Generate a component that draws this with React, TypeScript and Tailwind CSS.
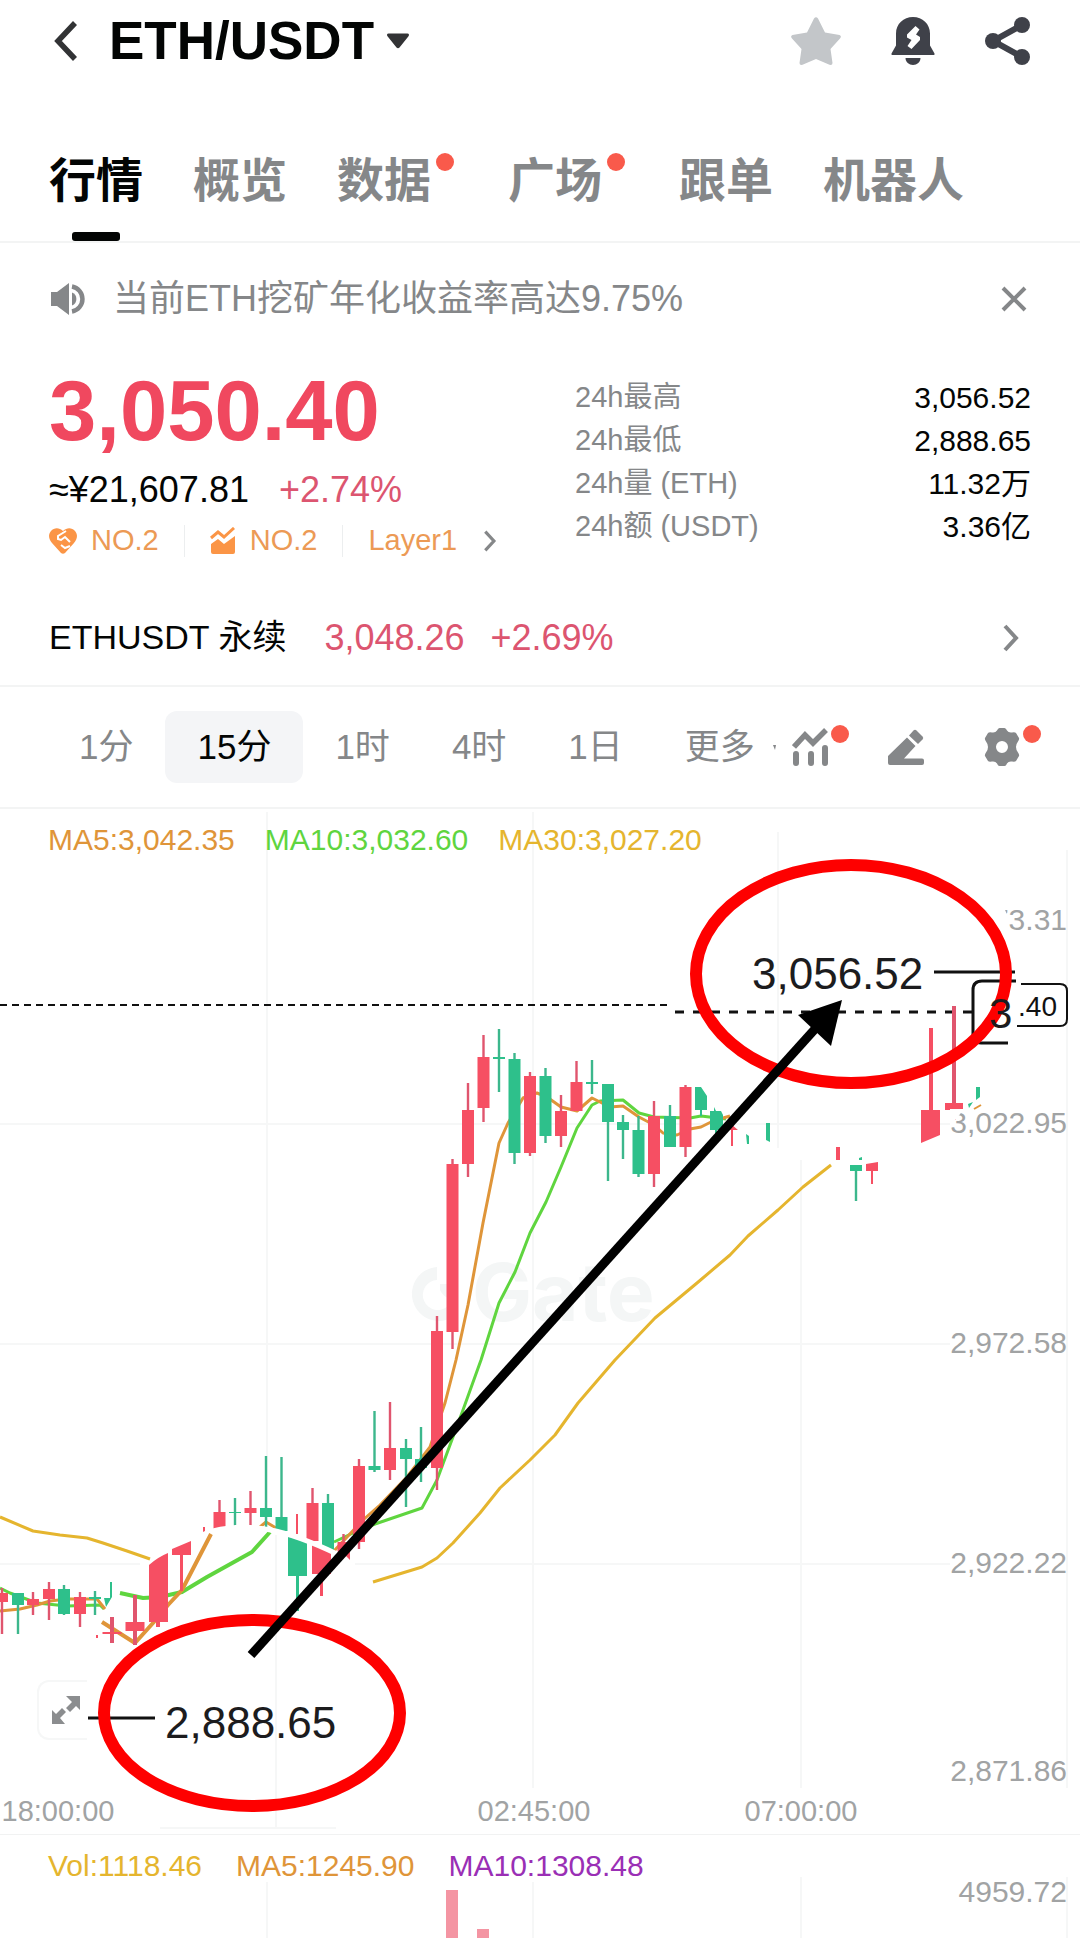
import { useState } from 'react';

const RED = '#f64f63';
const GREEN = '#2ec08b';

interface Candle {
  x: number;
  high: number;
  low: number;
  top: number;
  bottom: number;
  up: boolean;
  w?: number;
}

// [center x, wick top, wick bottom, body top, body bottom, rising, body width]
const candles: Candle[] = (
  [
    [2, 1588, 1634, 1593, 1602, 1],
    [18, 1593, 1634, 1593, 1605, 0],
    [33, 1592, 1615, 1599, 1605, 1],
    [49, 1582, 1620, 1589, 1599, 1],
    [64, 1585, 1615, 1589, 1614, 0],
    [80, 1592, 1627, 1597, 1614, 1],
    [95, 1591, 1615, 1597, 1599, 0],
    [112, 1617, 1643, 1632, 1634, 1, 19],
    [135, 1595, 1645, 1622, 1631, 1, 19],
    [219.5, 1500, 1512, 1512, 1530, 1],
    [235, 1498, 1527, 1512, 1513, 0],
    [250.5, 1491, 1526, 1508, 1513, 1],
    [266, 1456, 1527, 1508, 1517, 0],
    [281.5, 1457, 1517, 1517, 1531, 0],
    [312.5, 1488, 1503, 1503, 1541, 1],
    [328, 1494, 1503, 1503, 1550, 0],
    [343.5, 1534, 1542, 1542, 1556, 1],
    [359, 1459, 1549, 1466, 1542, 1],
    [374.5, 1411, 1472, 1466, 1470, 0],
    [390, 1402, 1480, 1448, 1470, 1],
    [406, 1439, 1507, 1448, 1459, 0],
    [421, 1427, 1482, 1459, 1468, 0],
    [437, 1316, 1490, 1331, 1468, 1],
    [452.5, 1159, 1349, 1164, 1332, 1],
    [468, 1083, 1177, 1110, 1164, 1],
    [483.5, 1035, 1122, 1057, 1108, 1],
    [499, 1029, 1092, 1057, 1059, 0],
    [514.5, 1053, 1164, 1059, 1153, 0],
    [530, 1072, 1156, 1076, 1153, 1],
    [545.5, 1068, 1143, 1076, 1136, 0],
    [561, 1095, 1147, 1111, 1136, 1],
    [576.5, 1061, 1111, 1082, 1111, 1],
    [592, 1060, 1094, 1082, 1084, 0],
    [608, 1084, 1181, 1084, 1122, 0],
    [623, 1115, 1159, 1122, 1130, 0],
    [638.5, 1116, 1177, 1130, 1174, 0],
    [654, 1101, 1187, 1116, 1174, 1],
    [670, 1105, 1147, 1116, 1147, 0],
    [685.5, 1085, 1157, 1087, 1147, 1],
    [856, 1165, 1201, 1165, 1171, 0],
    [954, 1006, 1120, 1103, 1110, 1, 18],
  ] as number[][]
).map(([x, high, low, top, bottom, up, w]) => ({ x, high, low, top, bottom, up: up === 1, w }));

const tabs = [
  { name: '行情' },
  { name: '概览' },
  { name: '数据', dot: true },
  { name: '广场', dot: true },
  { name: '跟单' },
  { name: '机器人' },
];

const stats = [
  { label: '24h最高', value: '3,056.52' },
  { label: '24h最低', value: '2,888.65' },
  { label: '24h量 (ETH)', value: '11.32万' },
  { label: '24h额 (USDT)', value: '3.36亿' },
];

const periods = ['1分', '15分', '1时', '4时', '1日', '更多'];

function Chevron({ className }: { className: string }) {
  return (
    <svg viewBox="0 0 16 28" className={className} fill="none" stroke="currentColor" strokeWidth="4">
      <path d="M2 2l11 12L2 26" />
    </svg>
  );
}

function RedDot({ className }: { className: string }) {
  return <span className={`absolute h-[18px] w-[18px] rounded-full bg-[#f95a4b] ${className}`} />;
}

function Header() {
  return (
    <header className="flex h-[82px] items-center px-[49px]">
      <button aria-label="返回" className="ml-1 text-[#323335]">
        <svg viewBox="0 0 26 42" className="h-[42px] w-[26px]" fill="none" stroke="currentColor" strokeWidth="5.5">
          <path d="M22 3L5 21l17 18" />
        </svg>
      </button>
      <button className="ml-[30px] flex items-center gap-3">
        <h1 className="text-[53px] font-bold leading-[60px] text-[#030504]">ETH/USDT</h1>
        <svg viewBox="0 0 24 16" className="h-4 w-6 fill-[#323335]">
          <path d="M2.500 0.500h19c1.500 0 2 1.500 1 2.700l-9 11.300c-.9 1-2.100 1-3 0L1.500 3.200C.5 2 1 .5 2.500 .5z" />
        </svg>
      </button>
      <div className="ml-auto flex items-center gap-[50px]">
        <button aria-label="收藏">
          <svg viewBox="0 0 50 48" className="h-12 w-[50px]" fill="#c3c6c9">
            <path d="M23 1.500q2-2.500 4 0l7 14 14.500 2.500q2.500 1 .5 3.500L39.500 32l2 14q0 2.500-3 1.800L25 42 11.500 47.800q-3 .7-3-1.800l2-14L1 21.500q-2-2.500.5-3.500L16 15.500z" />
          </svg>
        </button>
        <button aria-label="提醒">
          <svg viewBox="0 0 44 48" className="h-12 w-11" fill="#3f4149">
            <path d="M22 0c9.500 0 17 7 17 16.500v12l4.500 8q.5 1.500-1 1.500h-41q-1.500 0-1-1.500l4.500-8v-12C5 7 12.500 0 22 0z" />
            <path d="M14.500 41h15c0 4-3.500 7-7.500 7s-7.500-3-7.500-7z" />
            <path fill="#fff" d="M24.500 9l4 3.500-3.500 5 4 2.500v3L20.500 32l-4-3 4-6-4.500-2.500v-3z" />
          </svg>
        </button>
        <button aria-label="分享">
          <svg viewBox="0 0 46 48" className="h-12 w-[46px]" fill="#3f4149" stroke="#3f4149">
            <path d="M37 8L8 24l29 16" fill="none" strokeWidth="6" />
            <circle cx="37" cy="8" r="8" stroke="none" />
            <circle cx="8" cy="24" r="8" stroke="none" />
            <circle cx="37" cy="40" r="8" stroke="none" />
          </svg>
        </button>
      </div>
    </header>
  );
}

function Tabs() {
  const [active, setActive] = useState('行情');
  return (
    <nav className="flex gap-[50px] border-b-2 border-[#f3f4f4] px-[49px] pt-[71px]">
      {tabs.map((t) => (
        <button
          key={t.name}
          onClick={() => setActive(t.name)}
          className={`relative pb-8 text-[47px] font-bold leading-[56px] ${t.name === active ? 'text-[#030504]' : 'text-[#858789]'} ${t.dot ? 'mr-[27px]' : ''}`}
        >
          <span className="relative block">
            {t.name}
            {t.dot && <RedDot className="-right-[23px] top-0" />}
          </span>
          {t.name === active && (
            <span className="absolute bottom-0 left-1/2 h-[9px] w-12 -translate-x-1/2 rounded-[3px] bg-[#030504]" />
          )}
        </button>
      ))}
    </nav>
  );
}

function Notice() {
  return (
    <div className="flex h-28 items-center px-[49px] text-[#858789]">
      <svg viewBox="0 0 38 32" className="h-8 w-[38px]" fill="currentColor">
        <path d="M2 9h6L20 0v32L8 23H2z" />
        <path d="M23 9.500a7 7 0 0 1 0 13z" />
        <path d="M23 3.500a12.700 12.700 0 0 1 0 25" fill="none" stroke="currentColor" strokeWidth="4.500" />
      </svg>
      <p className="ml-[26px] text-[36px] leading-[44px]">当前ETH挖矿年化收益率高达9.75%</p>
      <button aria-label="关闭" className="ml-auto mr-1">
        <svg viewBox="0 0 26 26" className="h-[26px] w-[26px]" stroke="currentColor" strokeWidth="4">
          <path d="M2 2l22 22M24 2L2 24" />
        </svg>
      </button>
    </div>
  );
}

function Price() {
  return (
    <section className="flex justify-between px-[49px]">
      <div className="pt-[14px]">
        <div className="text-[85px] font-bold leading-[84px] text-[#f0485f]">3,050.40</div>
        <div className="mt-[15px] flex h-11 items-center gap-[30px] text-[36px]">
          <span className="text-[#030504]">≈¥21,607.81</span>
          <span className="text-[#dc5570]">+2.74%</span>
        </div>
        <div className="mt-[13px] flex h-8 items-center text-[29px] text-[#ec9a55]">
          <svg viewBox="0 0 28 26" className="h-[26px] w-7" fill="#fb9546">
            <path d="M14 3c4-4 9-3.500 12 0s2.500 8-1 12L16 25q-2 1.500-4 0L3 15C-.5 11-1 6.500 2 3s8-4 12 0z" />
            <path d="M17 3L9 8v3l3 1 4-3 5 5M12 17l4 3 5-2" fill="none" stroke="#fff" strokeWidth="2" />
          </svg>
          <span className="ml-[14px]">NO.2</span>
          <span className="mx-[25px] h-8 w-px bg-[#eceeef]" />
          <svg viewBox="0 0 26 28" className="h-7 w-[26px]" fill="#fb9546">
            <path d="M1 17l7-5 6 5 11-8v16q0 2-2 2H3q-2 0-2-2z" />
            <path d="M1 11l7-6 6 5 10-9" fill="none" stroke="#fb9546" strokeWidth="3" />
          </svg>
          <span className="ml-[14px]">NO.2</span>
          <span className="mx-[25px] h-8 w-px bg-[#eceeef]" />
          <a href="#layer1" className="flex items-center gap-[26px]">
            Layer1
            <Chevron className="h-[22px] w-[14px] text-[#858789]" />
          </a>
        </div>
      </div>
      <dl className="w-[456px] pt-[21px] text-[29px] leading-[43px]">
        {stats.map((s) => (
          <div key={s.label} className="flex h-[43px] justify-between">
            <dt className="text-[#858789]">{s.label}</dt>
            <dd className="text-[30px] text-[#030504]">{s.value}</dd>
          </div>
        ))}
      </dl>
    </section>
  );
}

function Perpetual() {
  return (
    <a href="#perpetual" className="mt-[33px] flex h-[97px] items-center border-b-2 border-[#f3f4f4] px-[49px] text-[36px]">
      <span className="text-[34px] text-[#030504]">ETHUSDT 永续</span>
      <span className="ml-[38px] text-[#dc5570]">3,048.26</span>
      <span className="ml-[26px] text-[#dc5570]">+2.69%</span>
      <Chevron className="ml-auto mr-3 h-7 w-4 text-[#858789]" />
    </a>
  );
}

function Toolbar() {
  const [period, setPeriod] = useState('15分');
  return (
    <div className="flex h-[122px] items-center border-b-2 border-[#f3f4f4] pl-[79px] pr-[60px] text-[#858789]">
      <div className="flex items-center gap-[62px] text-[35px]">
        {periods.map((p) => (
          <button
            key={p}
            onClick={() => setPeriod(p)}
            className={p === period ? '-mx-[30px] h-[72px] rounded-xl bg-[#f4f5f7] px-8 text-[#030504]' : ''}
          >
            {p}
          </button>
        ))}
      </div>
      <svg viewBox="0 0 3 5" className="ml-[18px] h-[5px] w-[3px]" fill="currentColor">
        <path d="M0 0h3l-1 5z" />
      </svg>
      <div className="ml-auto flex gap-[60px]">
        <button aria-label="指标" className="relative">
          <svg viewBox="0 0 36 38" className="h-[38px] w-9" fill="none" stroke="currentColor" strokeWidth="6">
            <path d="M2 19L13 7l8 8L34 2" strokeWidth="5.500" />
            <path d="M4 26v9M19 26v9M33 20v15" strokeLinecap="round" />
          </svg>
          <RedDot className="-right-[21px] -top-[3px]" />
        </button>
        <button aria-label="画线">
          <svg viewBox="0 0 36 38" className="h-[38px] w-9" fill="currentColor">
            <path d="M19 9.500L27.500 18 16 30.500h18q2 0 2 2V35q0 2-2 2H2q-2 0-2-2v-7z" />
            <path d="M21 7.500l4.500-5q1.500-1.500 3 0l6 6q1.500 1.500 0 3L30 16z" />
          </svg>
        </button>
        <button aria-label="设置" className="relative">
          <svg viewBox="0 0 36 38" className="h-[38px] w-9" fill="currentColor" fillRule="evenodd">
            <path d="M15.500 0h5q1.500 0 2.500 2.500Q24.500 5 28 4.500q3-.5 4 .5l3 5q.5 1.500-1 3.500-2 2.500-2 5.500t2 5.500q1.500 2 1 3.500l-3 5q-1 1-4 .5-3.500-.5-5 2Q22 38 20.500 38h-5Q14 38 13 35.500q-1.500-2.500-5-2-3 .5-4-.5l-3-5q-.5-1.500 1-3.500 2-2.500 2-5.500t-2-5.500q-1.500-2-1-3.500l3-5q1-1 4-.5 3.500.5 5-2Q14 0 15.500 0zM18 13a6 6 0 1 0 0 12 6 6 0 0 0 0-12z" />
          </svg>
          <RedDot className="-right-[21px] -top-[3px]" />
        </button>
      </div>
    </div>
  );
}

function Chart() {
  return (
    <section className="relative border-b border-[#f1f2f2]">
      <svg viewBox="0 809 1080 1025" className="block w-full font-['Liberation_Sans',sans-serif]">
        {/* grid */}
        <g stroke="#f6f7f7" strokeWidth="2">
          <path d="M267 812V1530M276 1535V1828M533 812V1788M778 832V1148M801 1160V1788M1067 850V1788" />
          <path d="M0 1124H950M0 1344H950M0 1564H140M355 1564H950M160 1828H336" />
        </g>

        {/* watermark */}
        <g fill="#f4f6f6">
          <path d="M437 1267v13a15 15 0 1 0 11 26l9 8a27 27 0 1 1-20-47z" />
          <path d="M440 1284h15l-4 15q-8-2-11-9z" />
          <text x="472" y="1321" fontSize="80" fontWeight="700" className="font-['Inter',sans-serif]">Gate</text>
        </g>

        {/* last price */}
        <path d="M0 1005H668" stroke="#111" strokeWidth="2" strokeDasharray="7 5" />
        <path d="M675 1012H973" stroke="#111" strokeWidth="3" strokeDasharray="9 9" />

        {/* moving averages, behind the candles */}
        <g fill="none" strokeWidth="3" strokeLinejoin="round">
          <path stroke="#e5b52e" d="M0 1517L33 1531 60 1535 87 1538 103 1543 127 1551 150 1559M373 1582L422 1567 437 1558 453 1543 480 1513 500 1488 530 1460 555 1435 578 1403 615 1360 655 1318 697 1283 730 1255 748 1236 778 1210 803 1187 831 1165" />
          <path stroke="#5fd53f" d="M0 1588L10 1593 37 1603 67 1606 100 1605 104 1609M334 1542L353 1533 375 1524 422 1508 437 1480 463 1410 481 1360 499 1303 515 1272 530 1233 546 1202 561 1167 577 1128 592 1105 600 1101 623 1100 639 1113 654 1117 690 1118 701 1116 726 1119" />
          <path stroke="#5fd53f" strokeWidth="4" d="M120 1593L143 1598 160 1597 182 1592 207 1577 252 1552 270 1532" />
          <path stroke="#df9539" d="M0 1611L20 1609 37 1605 50 1601 67 1599 97 1599 105 1609M260 1527L266 1522 276 1528M333 1552L363 1520 380 1505 407 1477 430 1447 445 1403 456 1360 468 1305 483 1223 499 1143 508 1123 523 1098 537 1093 547 1097 561 1107 577 1111 592 1098 600 1102 610 1107 623 1106 639 1117 654 1125 663 1133 677 1135 690 1129 701 1127 713 1121 730 1116" />
          <path stroke="#df9539" strokeWidth="4" d="M102 1622L135 1643 153 1623 168 1605 182 1590 211 1534" />
        </g>

        {/* candles */}
        {candles.map((c) => (
          <g key={c.x}>
            <path d={`M${c.x} ${c.high}V${c.low}`} stroke={c.up ? '#e0556e' : '#3cb78c'} strokeWidth={c.w ? 4 : 2.4} />
            <rect x={c.x - (c.w ?? 12) / 2} y={c.top} width={c.w ?? 12} height={c.bottom - c.top} fill={c.up ? RED : GREEN} />
          </g>
        ))}

        {/* candles cut by the inset edges */}
        <g fill={RED}>
          <path d="M149 1565q9-8 19-12v69h-8v5h-4v-5h-7z" />
          <path d="M172 1549l19-8v14h-8v36h-3v-36h-8z" />
          <path d="M203 1527h2v4l-2 1zM296 1514h2v20h-2z" />
          <path d="M312 1543l19 10v21h-8v22h-3v-22h-8z" />
          <path d="M343 1553l7-1v8z" />
          <path d="M727 1130l4-6 7 6h-5v16h-2v-16z" />
          <path d="M836 1147h4v13h-4zM866 1164l12-2v9h-5v13h-2v-13h-5z" />
          <path d="M929 1028h4v82h7v25l-19 8v-33h8z" />
          <path d="M96 1635h2v3h-2z" />
        </g>
        <g fill={GREEN}>
          <path d="M110 1582h2v15l-6 10-2-9h6z" />
          <path d="M288 1536l19 6v34h-8v35h-3v-35h-8z" />
          <path d="M695 1087h6l6 9v14h-5v6h-2v-6h-5z" />
          <path d="M710 1111h4v-4l2 4h5l2 4v15h-6v5h-2v-5h-5z" />
          <path d="M746 1134l3 2v8h-2zM766 1123h4v19l-4-2z" />
          <path d="M859 1158l3-1v3h-3zM976 1087h4v10l-4 3zM968 1104l5-2-4 6z" />
        </g>
        <path d="M974 1109l7-4" stroke="#df9539" strokeWidth="2" />
        <path d="M213 1531C250 1522 285 1529 337 1554" fill="none" stroke="#fff" strokeWidth="5" />

        {/* axis labels */}
        <g fill="#a1a3a4" fontSize="30" textAnchor="end">
          <text x="1067" y="930">73.31</text>
          <text x="1067" y="1133">3,022.95</text>
          <text x="1067" y="1353">2,972.58</text>
          <text x="1067" y="1573">2,922.22</text>
          <text x="1067" y="1781">2,871.86</text>
        </g>
        <path d="M988 905H1003L1008 917V935H988z" fill="#fff" />
        <path d="M950 1109l14 0-11 14-3 8z" fill="#fff" />
        <g fill="#a1a3a4" fontSize="29" textAnchor="middle">
          <text x="58" y="1821">18:00:00</text>
          <text x="534" y="1821">02:45:00</text>
          <text x="801" y="1821">07:00:00</text>
        </g>

        {/* price tag */}
        <g fill="none" stroke="#111">
          <path d="M1021 984H1060q7 0 7 7v28q0 7-7 7H1017" strokeWidth="2" />
          <path d="M1016 981H982q-9 0-9 9V1035q0 8 8 8h27" strokeWidth="3" />
          <path d="M934 972H1015M88 1718H155" strokeWidth="3" />
        </g>
        <text x="1057" y="1016" fontSize="28" textAnchor="end" fill="#111">.40</text>

        {/* annotations */}
        <g fill="#1c1c1e" fontSize="44">
          <text x="752" y="989">3,056.52</text>
          <text x="165" y="1738">2,888.65</text>
        </g>
        <g fill="none" stroke="#fe0000" strokeWidth="12">
          <ellipse cx="851" cy="974" rx="155" ry="109" />
          <ellipse cx="252" cy="1713" rx="148" ry="93" />
        </g>
        <text x="989" y="1028" fontSize="42" fill="#1c1c1e">3</text>
        <path d="M251 1655L815 1029" stroke="#000" strokeWidth="9" />
        <path d="M842 1000L798 1015 831 1046z" />
      </svg>

      <div className="absolute left-0 top-0 flex gap-[30px] px-12 pt-[13px] text-[30px] leading-9">
        <span className="text-[#df9539]">MA5:3,042.35</span>
        <span className="text-[#5fd53f]">MA10:3,032.60</span>
        <span className="text-[#e5b52e]">MA30:3,027.20</span>
      </div>

      <button
        aria-label="全屏"
        className="absolute bottom-[94px] left-[37px] flex h-[60px] w-[50px] items-center rounded-l-xl border-2 border-r-0 border-[#f6f7f7] pl-[13px]"
      >
        <svg viewBox="0 0 28 28" className="h-7 w-7" fill="#8b8d8f">
          <path d="M14 0h14v14l-4-4-6 6-4-4 6-6zM0 14l4 4 6-6 4 4-6 6 5 6H0z" />
        </svg>
      </button>
    </section>
  );
}

function Volume() {
  return (
    <section className="relative">
      <svg viewBox="0 1835 1080 103" className="block w-full font-['Liberation_Sans',sans-serif]">
        <path d="M267 1882V1938M533 1882V1938M801 1877V1938M1067 1877V1938" stroke="#f6f7f7" strokeWidth="2" />
        <path d="M446 1890h12v48h-12zM477 1929h12v9h-12z" fill="#f495a3" />
        <text x="1067" y="1902" fontSize="30" textAnchor="end" fill="#a1a3a4">4959.72</text>
      </svg>
      <div className="absolute left-0 top-0 flex gap-[34px] px-12 pt-[13px] text-[30px] leading-9">
        <span className="text-[#e5b52e]">Vol:1118.46</span>
        <span className="text-[#df9539]">MA5:1245.90</span>
        <span className="text-[#9a2fb5]">MA10:1308.48</span>
      </div>
    </section>
  );
}

export default function App() {
  return (
    <main className="w-full overflow-hidden bg-white font-['Liberation_Sans','Noto_Sans_CJK_SC',sans-serif]">
      <Header />
      <Tabs />
      <Notice />
      <Price />
      <Perpetual />
      <Toolbar />
      <Chart />
      <Volume />
    </main>
  );
}
